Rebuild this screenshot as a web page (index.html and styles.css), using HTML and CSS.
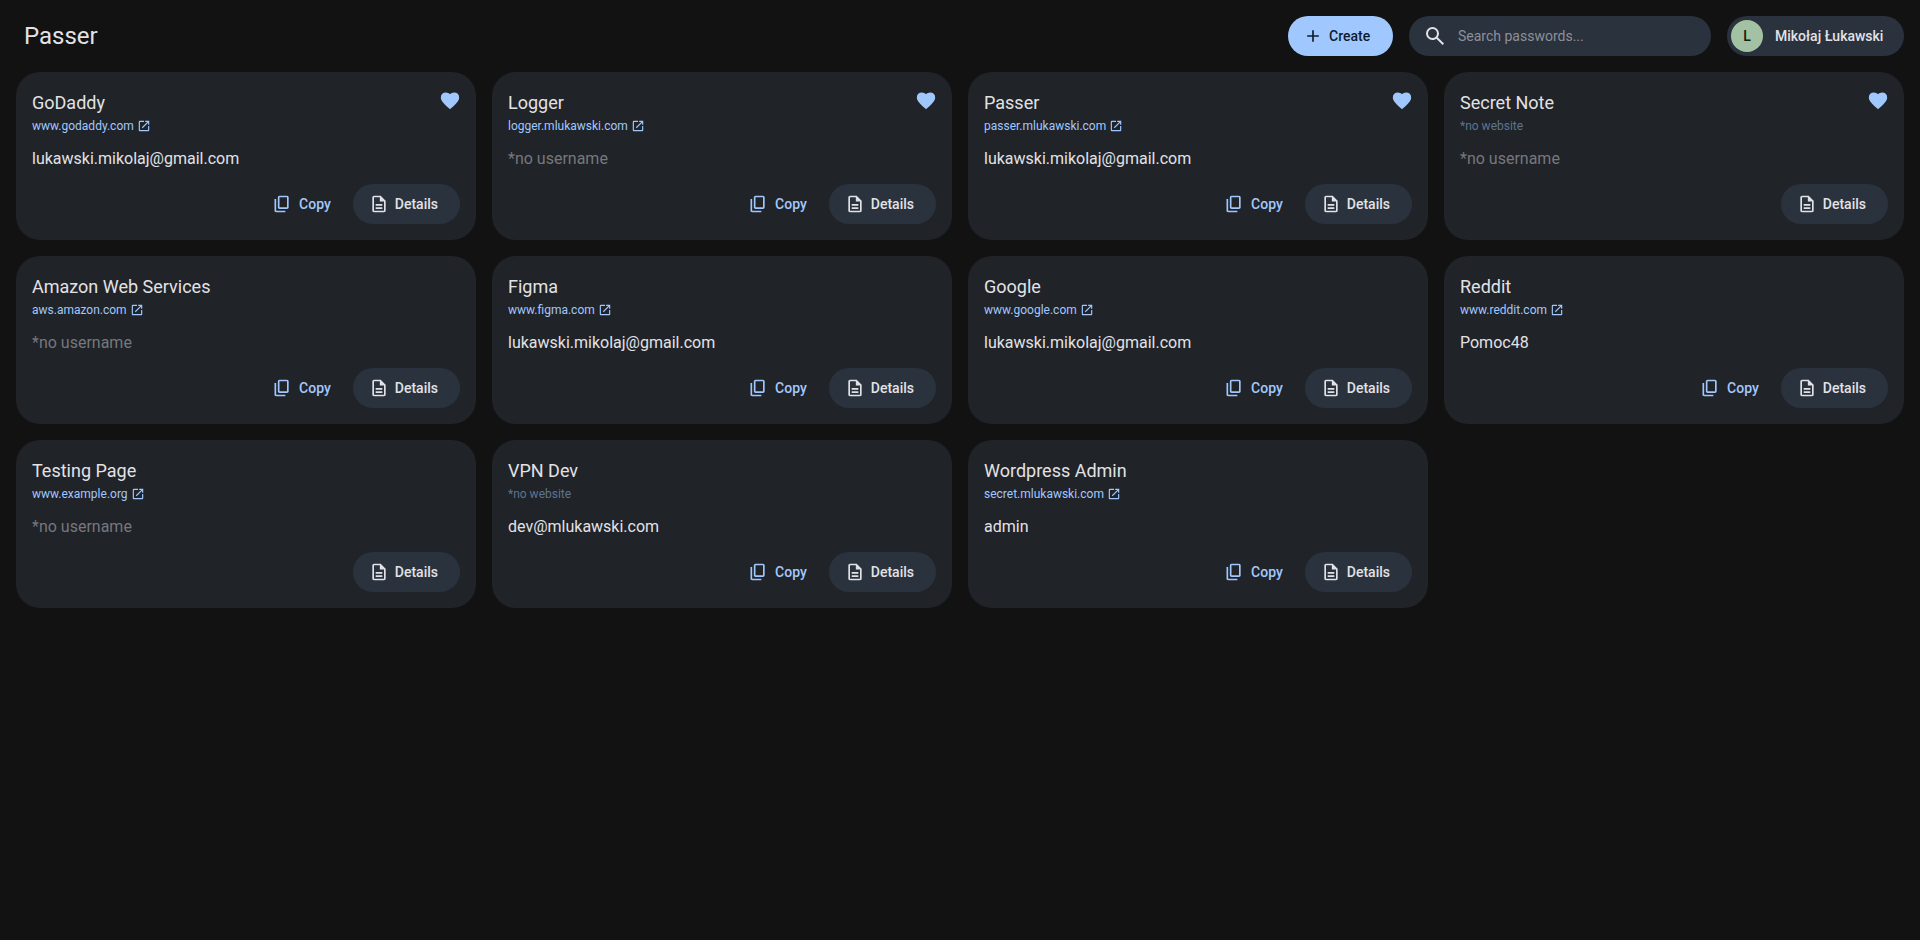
FILE: index.html
```html
<!DOCTYPE html>
<html lang="en">
<head>
    <meta charset="UTF-8">
    <meta name="viewport" content="width=device-width, initial-scale=1.0">
    <title>Passer</title>
    <link rel="stylesheet" href="styles.css">
</head>
<body>
    <svg class="sprite" width="0" height="0">
        <symbol id="i-heart" viewBox="0 0 24 24"><path d="m12 21-1.45-1.3q-2.525-2.275-4.175-3.925T3.75 12.812Q2.775 11.5 2.388 10.4T2 8.15Q2 5.8 3.575 4.225T7.5 2.65q1.3 0 2.475.55T12 4.75q.85-1 2.025-1.55t2.475-.55q2.35 0 3.925 1.575T22 8.15q0 1.15-.388 2.25t-1.362 2.412q-.975 1.313-2.625 2.963T13.45 19.7L12 21Z"/></symbol>
        <symbol id="i-open" viewBox="0 0 24 24"><path d="M5 21q-.825 0-1.412-.587Q3 19.825 3 19V5q0-.825.588-1.413Q4.175 3 5 3h7v2H5v14h14v-7h2v7q0 .825-.587 1.413Q19.825 21 19 21H5Zm4.7-5.3-1.4-1.4L17.6 5H14V3h7v7h-2V6.4l-9.3 9.3Z"/></symbol>
        <symbol id="i-copy" viewBox="0 0 24 24"><path d="M9 18q-.825 0-1.412-.587Q7 16.825 7 16V4q0-.825.588-1.413Q8.175 2 9 2h9q.825 0 1.413.587Q20 3.175 20 4v12q0 .825-.587 1.413Q18.825 18 18 18H9Zm0-2h9V4H9v12Zm-4 6q-.825 0-1.412-.587Q3 20.825 3 20V6h2v14h11v2H5Z"/></symbol>
        <symbol id="i-doc" viewBox="0 0 24 24"><path d="M8 18h8v-2H8v2Zm0-4h8v-2H8v2Zm-2 8q-.825 0-1.412-.587Q4 20.825 4 20V4q0-.825.588-1.413Q5.175 2 6 2h8l6 6v12q0 .825-.587 1.413Q18.825 22 18 22H6Zm7-13V4H6v16h12V9h-5Z"/></symbol>
    </svg>

    <header class="topbar">
        <h1 class="brand">Passer</h1>
        <button class="btn btn-create" type="button">
            <svg class="icon" viewBox="0 0 24 24"><path d="M11 19v-6H5v-2h6V5h2v6h6v2h-6v6h-2Z"/></svg>
            Create
        </button>
        <label class="search">
            <svg class="search-icon" viewBox="0 0 24 24"><path d="m19.6 21-6.3-6.3q-.75.6-1.725.95Q10.6 16 9.5 16q-2.725 0-4.612-1.888Q3 12.225 3 9.5t1.888-4.612Q6.775 3 9.5 3t4.613 1.888Q16 6.775 16 9.5q0 1.1-.35 2.075-.35.975-.95 1.725l6.3 6.3-1.4 1.4ZM9.5 14q1.875 0 3.188-1.312Q14 11.375 14 9.5t-1.312-3.188Q11.375 5 9.5 5T6.312 6.312Q5 7.625 5 9.5t1.312 3.188Q7.625 14 9.5 14Z"/></svg>
            <input type="text" placeholder="Search passwords...">
        </label>
        <div class="user">
            <span class="avatar">L</span>
            <span class="user-name">Mikołaj Łukawski</span>
        </div>
    </header>

    <main class="grid" id="grid"></main>

    <script>
        const items = [
            { name: 'GoDaddy', site: 'www.godaddy.com', user: 'lukawski.mikolaj@gmail.com', fav: true, copy: true },
            { name: 'Logger', site: 'logger.mlukawski.com', user: '', fav: true, copy: true },
            { name: 'Passer', site: 'passer.mlukawski.com', user: 'lukawski.mikolaj@gmail.com', fav: true, copy: true },
            { name: 'Secret Note', site: '', user: '', fav: true, copy: false },
            { name: 'Amazon Web Services', site: 'aws.amazon.com', user: '', copy: true },
            { name: 'Figma', site: 'www.figma.com', user: 'lukawski.mikolaj@gmail.com', copy: true },
            { name: 'Google', site: 'www.google.com', user: 'lukawski.mikolaj@gmail.com', copy: true },
            { name: 'Reddit', site: 'www.reddit.com', user: 'Pomoc48', copy: true },
            { name: 'Testing Page', site: 'www.example.org', user: '', copy: false },
            { name: 'VPN Dev', site: '', user: 'dev@mlukawski.com', copy: true },
            { name: 'Wordpress Admin', site: 'secret.mlukawski.com', user: 'admin', copy: true },
        ];

        const use = (id, cls) => `<svg class="${cls}"><use href="#${id}"/></svg>`;

        document.getElementById('grid').innerHTML = items.map((item) => `
            <article class="card">
                <div class="card-head">
                    <h2 class="card-title">${item.name}</h2>
                    ${item.fav ? use('i-heart', 'heart') : ''}
                </div>
                ${item.site
                    ? `<a class="site">${item.site}${use('i-open', 'site-icon')}</a>`
                    : '<span class="site site-none">*no website</span>'}
                ${item.user
                    ? `<p class="username">${item.user}</p>`
                    : '<p class="username username-none">*no username</p>'}
                <div class="actions">
                    ${item.copy ? `<button class="btn btn-copy" type="button">${use('i-copy', 'icon')}Copy</button>` : ''}
                    <button class="btn btn-details" type="button">${use('i-doc', 'icon')}Details</button>
                </div>
            </article>
        `).join('');
    </script>
</body>
</html>
```

FILE: styles.css
```css
* {
    box-sizing: border-box;
}

body {
    margin: 0;
    padding: 0 16px;
    min-height: 940px;
    background-color: #121212;
    color: #e2e2e6;
    font-family: Roboto, "Liberation Sans", sans-serif;
}

.sprite {
    position: absolute;
}

.topbar {
    display: flex;
    align-items: center;
    height: 72px;
}

.brand {
    flex: 1;
    margin: 0;
    padding-left: 8px;
    font-size: 24px;
    font-weight: 400;
}

.btn {
    display: flex;
    align-items: center;
    height: 40px;
    border: none;
    border-radius: 20px;
    font-family: inherit;
    font-size: 14px;
    font-weight: 500;
    cursor: pointer;
}

.icon {
    width: 20px;
    height: 20px;
    margin-right: 6px;
    fill: currentColor;
}

.btn-create {
    width: 105px;
    padding: 0 0 0 15px;
    background-color: #a0c8ff;
    color: #0f1c2c;
}

.search {
    display: flex;
    align-items: center;
    width: 302px;
    height: 40px;
    margin-left: 16px;
    padding-left: 14px;
    border-radius: 20px;
    background-color: #2a323e;
}

.search-icon {
    width: 24px;
    height: 24px;
    fill: #e2e2e6;
}

.search input {
    flex: 1;
    min-width: 0;
    margin-left: 9px;
    border: none;
    outline: none;
    background: none;
    color: #e2e2e6;
    font-family: inherit;
    font-size: 14px;
}

.search input::placeholder {
    color: #8e9099;
    opacity: 1;
}

.user {
    display: flex;
    align-items: center;
    width: 177px;
    height: 40px;
    margin-left: 16px;
    padding-left: 4px;
    border-radius: 20px;
    background-color: #2a323e;
}

.avatar {
    display: flex;
    align-items: center;
    justify-content: center;
    width: 32px;
    height: 32px;
    border-radius: 50%;
    background-color: #a3c2a3;
    color: #10200f;
    font-size: 14px;
    font-weight: 500;
}

.user-name {
    margin-left: 12px;
    font-size: 14px;
    font-weight: 500;
}

.grid {
    display: grid;
    grid-template-columns: repeat(4, 1fr);
    grid-auto-rows: 168px;
    gap: 16px;
}

.card {
    display: flex;
    flex-direction: column;
    padding: 16px;
    border-radius: 24px;
    background-color: #202328;
}

.card-head {
    display: flex;
    justify-content: space-between;
    height: 30px;
}

.card-title {
    margin: 0;
    font-size: 18px;
    font-weight: 400;
    line-height: 30px;
}

.heart {
    width: 22px;
    height: 22px;
    margin: 2px -1px 0 0;
    fill: #a0c8ff;
}

.site {
    display: flex;
    align-items: center;
    height: 16px;
    font-size: 12px;
    color: #a0c8ff;
}

.site-none {
    color: #5f7490;
}

.site-icon {
    width: 14px;
    height: 14px;
    margin-left: 3px;
    fill: currentColor;
}

.username {
    margin: 13px 0 0;
    font-size: 16px;
    line-height: 24px;
}

.username-none {
    color: #76787d;
}

.actions {
    display: flex;
    justify-content: flex-end;
    gap: 8px;
    margin-top: auto;
}

.btn-copy {
    padding: 0 14px 0 12px;
    background: none;
    color: #a0c8ff;
}

.btn-copy .icon {
    margin-right: 7px;
}

.btn-details {
    padding: 0 22px 0 16px;
    background-color: #2a323e;
    color: #e2e2e6;
}
```
